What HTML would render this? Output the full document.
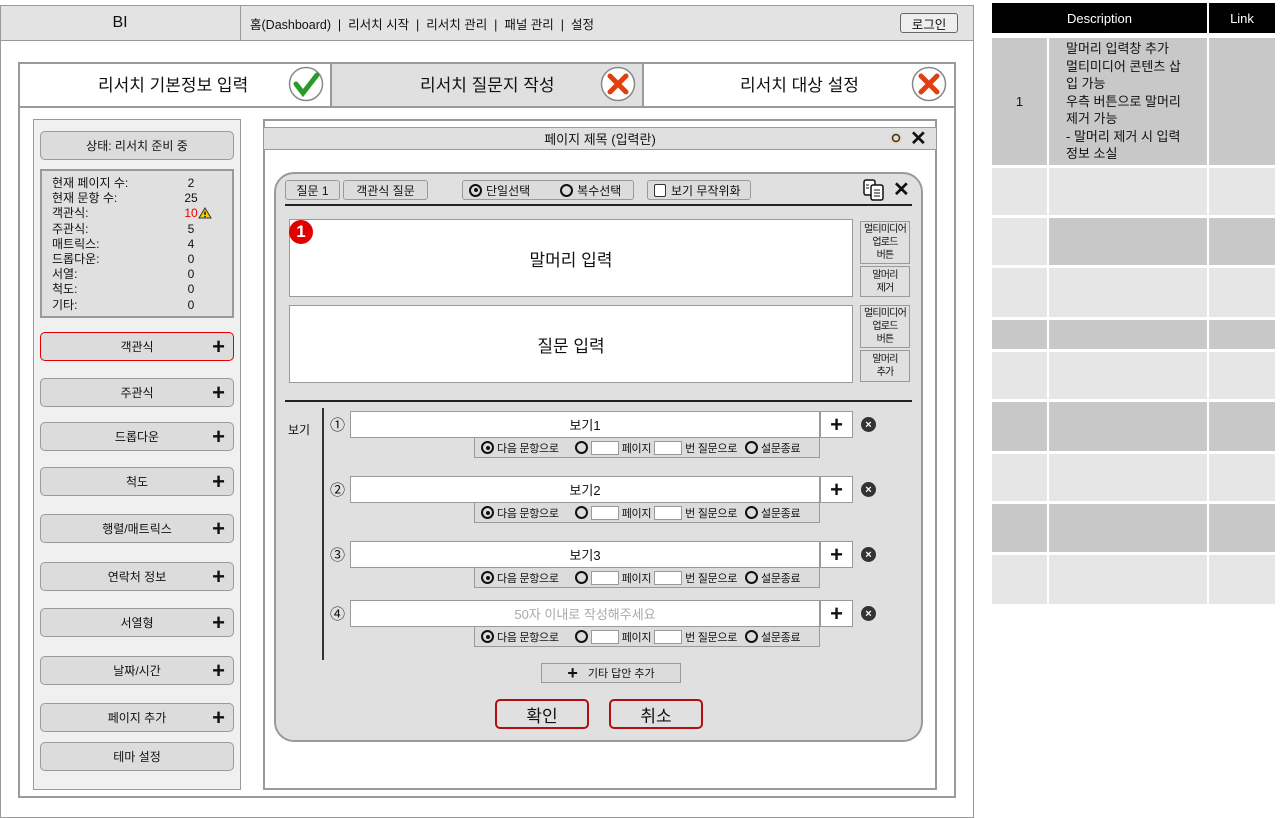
<!DOCTYPE html>
<html><head><meta charset="utf-8"><style>
*{box-sizing:border-box;margin:0;padding:0}
body{width:1280px;height:818px;background:#fff;position:relative;overflow:hidden;font-family:"Liberation Sans","Noto Sans CJK KR",sans-serif;font-size:12px;color:#111}
.a{position:absolute}
.c{display:flex;align-items:center;justify-content:center;text-align:center}
.btn{position:absolute;background:#dcdcdc;border:1px solid #9a9a9a;border-radius:5px;display:flex;align-items:center;justify-content:center;font-size:12px}
.plus{position:absolute;right:8px;top:50%;transform:translateY(-50%);font-size:22px;font-weight:bold;line-height:1}
.wbox{position:absolute;background:#fff;border:1px solid #9a9a9a;display:flex;align-items:center;justify-content:center}
.side{position:absolute;background:#e0e0e0;border:1px solid #9a9a9a;font-size:10px;letter-spacing:-0.8px;line-height:13px;text-align:center;display:flex;align-items:center;justify-content:center;white-space:nowrap}
.rad{display:inline-block;width:13px;height:13px;border:2px solid #111;border-radius:50%;vertical-align:middle;position:relative}
.rad.on::after{content:"";position:absolute;left:2.5px;top:2.5px;width:4px;height:4px;background:#111;border-radius:50%}
.sub{position:absolute;left:474px;width:346px;height:21px;background:#dcdcdc;border:1px solid #9a9a9a;font-size:11px;letter-spacing:-0.3px;display:flex;align-items:center;gap:3px;padding-left:6px}
.sb{display:inline-block;width:28px;height:14px;background:#fff;border:1px solid #9a9a9a}
.xc{position:absolute;width:15px;height:15px;border-radius:50%;background:#333;color:#fff;font-size:11px;font-weight:bold;display:flex;align-items:center;justify-content:center}
.pl{position:absolute;width:33px;height:27px;background:#fff;border:1px solid #9a9a9a;font-size:22px;font-weight:bold;display:flex;align-items:center;justify-content:center}
.td{position:absolute}
</style></head><body>
<div class="a" style="left:0;top:5px;width:974px;height:813px;border:1px solid #9a9a9a"></div>
<div class="a" style="left:0;top:5px;width:974px;height:36px;background:#e3e3e3;border:1px solid #9a9a9a"></div>
<div class="a c" style="left:0;top:5px;width:241px;height:36px;border-right:1px solid #9a9a9a;font-size:16px">BI</div>
<div class="a" style="left:250px;top:14px;font-size:12.5px">홈(Dashboard) &nbsp;|&nbsp; 리서치 시작 &nbsp;|&nbsp; 리서치 관리 &nbsp;|&nbsp; 패널 관리 &nbsp;|&nbsp; 설정</div>
<div class="a c" style="left:900px;top:13px;width:58px;height:20px;border:1px solid #666;border-radius:3px;background:#eee;font-size:12.5px">로그인</div>

<div class="a" style="left:18px;top:62px;width:938px;height:736px;border:2px solid #9a9a9a"></div>
<div class="a" style="left:18px;top:62px;width:938px;height:46px;border:2px solid #9a9a9a"></div>
<div class="a" style="left:330px;top:64px;width:314px;height:42px;background:#e0e0e0;border-left:2px solid #9a9a9a;border-right:2px solid #9a9a9a"></div>
<div class="a" style="left:98px;top:71px;font-size:17px">리서치 기본정보 입력</div>
<div class="a" style="left:420px;top:71px;font-size:17px">리서치 질문지 작성</div>
<div class="a" style="left:740px;top:71px;font-size:17px">리서치 대상 설정</div>
<svg class="a" style="left:288px;top:66px" width="36" height="36"><circle cx="18" cy="18" r="16.5" fill="#fff" stroke="#888" stroke-width="1.5"/><path d="M8 18 L15 27 L29 9" fill="none" stroke="#2a9a2a" stroke-width="5" stroke-linecap="round"/></svg>
<svg class="a" style="left:600px;top:66px" width="36" height="36"><circle cx="18" cy="18" r="16.5" fill="#fff" stroke="#888" stroke-width="1.5"/><path d="M10 10 L26 26 M26 10 L10 26" stroke="#e04010" stroke-width="5" stroke-linecap="round"/></svg>
<svg class="a" style="left:911px;top:66px" width="36" height="36"><circle cx="18" cy="18" r="16.5" fill="#fff" stroke="#888" stroke-width="1.5"/><path d="M10 10 L26 26 M26 10 L10 26" stroke="#e04010" stroke-width="5" stroke-linecap="round"/></svg>

<div class="a" style="left:33px;top:119px;width:208px;height:671px;background:#f0f0f0;border:1px solid #9a9a9a"></div>
<div class="btn" style="left:40px;top:131px;width:194px;height:29px">상태: 리서치 준비 중</div>
<div class="a" style="left:40px;top:169px;width:194px;height:149px;background:#e0e0e0;border:2px solid #9a9a9a"></div>
<div class="a" style="left:52px;top:176px;font-size:12px;line-height:15.2px">현재 페이지 수:<br>현재 문항 수:<br>객관식:<br>주관식:<br>매트릭스:<br>드롭다운:<br>서열:<br>척도:<br>기타:</div>
<div class="a" style="left:180px;top:176px;font-size:12px;line-height:15.2px;text-align:center;width:22px">2<br>25<br><span style="color:#e00">10</span><br>5<br>4<br>0<br>0<br>0<br>0</div>
<svg class="a" style="left:198px;top:207px" width="14" height="12"><path d="M7 1 L13 11 L1 11Z" fill="#f5d000" stroke="#333"/><path d="M7 4.5 V8" stroke="#000" stroke-width="1.3"/><circle cx="7" cy="9.6" r=".7"/></svg>
<div class="btn" style="left:40px;top:332px;width:194px;height:29px;border:1.5px solid #e00000">객관식<span class="plus">+</span></div>
<div class="btn" style="left:40px;top:378px;width:194px;height:29px">주관식<span class="plus">+</span></div>
<div class="btn" style="left:40px;top:422px;width:194px;height:29px">드롭다운<span class="plus">+</span></div>
<div class="btn" style="left:40px;top:467px;width:194px;height:29px">척도<span class="plus">+</span></div>
<div class="btn" style="left:40px;top:514px;width:194px;height:29px">행렬/매트릭스<span class="plus">+</span></div>
<div class="btn" style="left:40px;top:562px;width:194px;height:29px">연락처 정보<span class="plus">+</span></div>
<div class="btn" style="left:40px;top:608px;width:194px;height:29px">서열형<span class="plus">+</span></div>
<div class="btn" style="left:40px;top:656px;width:194px;height:29px">날짜/시간<span class="plus">+</span></div>
<div class="btn" style="left:40px;top:703px;width:194px;height:29px">페이지 추가<span class="plus">+</span></div>
<div class="btn" style="left:40px;top:742px;width:194px;height:29px">테마 설정</div>

<div class="a" style="left:263px;top:119px;width:674px;height:671px;border:2px solid #9a9a9a"></div>
<div class="a c" style="left:263px;top:127px;width:674px;height:23px;background:#e0e0e0;border:1px solid #9a9a9a;font-size:13px">페이지 제목 (입력란)</div>
<svg class="a" style="left:888px;top:130px" width="16" height="16"><circle cx="8" cy="8" r="6" fill="#e8d8c0"/><circle cx="8" cy="8" r="3.5" fill="none" stroke="#333" stroke-width="1.5"/></svg>
<div class="a" style="left:910px;top:126px;font-size:20px;font-weight:bold">✕</div>

<div class="a" style="left:274px;top:172px;width:649px;height:570px;background:#e0e0e0;border:2px solid #9a9a9a;border-radius:20px"></div>
<div class="btn" style="left:285px;top:180px;width:55px;height:20px;border-radius:3px;font-size:12px">질문 1</div>
<div class="btn" style="left:343px;top:180px;width:85px;height:20px;border-radius:3px;font-size:12px">객관식 질문</div>
<div class="btn" style="left:462px;top:180px;width:172px;height:20px;border-radius:3px;font-size:12px;justify-content:flex-start;padding-left:6px;gap:4px"><span class="rad on"></span>단일선택<span style="width:22px"></span><span class="rad"></span>복수선택</div>
<div class="btn" style="left:647px;top:180px;width:104px;height:20px;border-radius:3px;font-size:12px;justify-content:flex-start;padding-left:6px;gap:5px"><span style="display:inline-block;width:12px;height:13px;border:1.5px solid #333;border-radius:2px;background:#fff"></span>보기 무작위화</div>
<svg class="a" style="left:862px;top:178px" width="24" height="24"><rect x="2" y="2" width="11" height="15" rx="2" fill="#fff" stroke="#111" stroke-width="1.5"/><rect x="9" y="7" width="12" height="15" rx="2" fill="#fff" stroke="#111" stroke-width="1.5"/><path d="M12 12h6M12 15h6M12 18h6M4 7h3M4 10h3" stroke="#111"/></svg>
<div class="a" style="left:893px;top:177px;font-size:20px;font-weight:bold">✕</div>
<div class="a" style="left:285px;top:204px;width:627px;height:2px;background:#222"></div>

<div class="wbox" style="left:289px;top:219px;width:564px;height:78px;font-size:17px">말머리 입력</div>
<div class="a c" style="left:289px;top:220px;width:24px;height:24px;border-radius:50%;background:#e00000;color:#fff;font-size:17px;font-weight:bold">1</div>
<div class="side" style="left:860px;top:221px;width:50px;height:43px">멀티미디어<br>업로드<br>버튼</div>
<div class="side" style="left:860px;top:266px;width:50px;height:31px">말머리<br>제거</div>
<div class="wbox" style="left:289px;top:305px;width:564px;height:78px;font-size:17px">질문 입력</div>
<div class="side" style="left:860px;top:305px;width:50px;height:43px">멀티미디어<br>업로드<br>버튼</div>
<div class="side" style="left:860px;top:350px;width:50px;height:32px">말머리<br>추가</div>
<div class="a" style="left:285px;top:400px;width:627px;height:2px;background:#222"></div>

<div class="a" style="left:288px;top:421px;font-size:12px">보기</div>
<div class="a" style="left:322px;top:408px;width:1.5px;height:252px;background:#333"></div>

<div class="a" style="left:330px;top:414px;font-size:15px">①</div>
<div class="wbox" style="left:350px;top:411px;width:470px;height:27px;font-size:13px">보기1</div>
<div class="pl" style="left:820px;top:411px">+</div><div class="xc" style="left:861px;top:417px">×</div>
<div class="sub" style="top:437px"><span class="rad on"></span>다음 문항으로<span style="width:10px"></span><span class="rad"></span><span class="sb"></span>페이지<span class="sb"></span>번 질문으로<span style="width:2px"></span><span class="rad"></span>설문종료</div>

<div class="a" style="left:330px;top:479px;font-size:15px">②</div>
<div class="wbox" style="left:350px;top:476px;width:470px;height:27px;font-size:13px">보기2</div>
<div class="pl" style="left:820px;top:476px">+</div><div class="xc" style="left:861px;top:482px">×</div>
<div class="sub" style="top:502px"><span class="rad on"></span>다음 문항으로<span style="width:10px"></span><span class="rad"></span><span class="sb"></span>페이지<span class="sb"></span>번 질문으로<span style="width:2px"></span><span class="rad"></span>설문종료</div>

<div class="a" style="left:330px;top:544px;font-size:15px">③</div>
<div class="wbox" style="left:350px;top:541px;width:470px;height:27px;font-size:13px">보기3</div>
<div class="pl" style="left:820px;top:541px">+</div><div class="xc" style="left:861px;top:547px">×</div>
<div class="sub" style="top:567px"><span class="rad on"></span>다음 문항으로<span style="width:10px"></span><span class="rad"></span><span class="sb"></span>페이지<span class="sb"></span>번 질문으로<span style="width:2px"></span><span class="rad"></span>설문종료</div>

<div class="a" style="left:330px;top:603px;font-size:15px">④</div>
<div class="wbox" style="left:350px;top:600px;width:470px;height:27px;font-size:13px;color:#aaa">50자 이내로 작성해주세요</div>
<div class="pl" style="left:820px;top:600px">+</div><div class="xc" style="left:861px;top:606px">×</div>
<div class="sub" style="top:626px"><span class="rad on"></span>다음 문항으로<span style="width:10px"></span><span class="rad"></span><span class="sb"></span>페이지<span class="sb"></span>번 질문으로<span style="width:2px"></span><span class="rad"></span>설문종료</div>

<div class="a c" style="left:541px;top:663px;width:140px;height:20px;background:#dcdcdc;border:1px solid #9a9a9a;font-size:11px;gap:10px"><b style="font-size:18px">+</b>기타 답안 추가</div>
<div class="a c" style="left:495px;top:699px;width:94px;height:30px;border:2px solid #b01010;border-radius:5px;background:#e0e0e0;font-size:17px">확인</div>
<div class="a c" style="left:609px;top:699px;width:94px;height:30px;border:2px solid #b01010;border-radius:5px;background:#e0e0e0;font-size:17px">취소</div>

<div class="a c" style="left:992px;top:3px;width:215px;height:30px;background:#000;color:#fff;font-size:13px">Description</div>
<div class="a c" style="left:1209px;top:3px;width:66px;height:30px;background:#000;color:#fff;font-size:13px">Link</div>
<div class="td c" style="left:992px;top:38px;width:55px;height:127px;background:#c8c8c8;font-size:13px">1</div>
<div class="td" style="left:1049px;top:38px;width:158px;height:127px;background:#c8c8c8;font-size:13px;line-height:17.5px;padding:2px 0 0 17px">말머리 입력창 추가<br>멀티미디어 콘텐츠 삽<br>입 가능<br>우측 버튼으로 말머리<br>제거 가능<br>- 말머리 제거 시 입력<br>정보 소실</div>
<div class="td" style="left:1209px;top:38px;width:66px;height:127px;background:#c8c8c8"></div>

<div class="td" style="left:992px;top:168px;width:55px;height:47px;background:#e6e6e6"></div><div class="td" style="left:1049px;top:168px;width:158px;height:47px;background:#e6e6e6"></div><div class="td" style="left:1209px;top:168px;width:66px;height:47px;background:#e6e6e6"></div>
<div class="td" style="left:992px;top:218px;width:55px;height:47px;background:#e6e6e6"></div><div class="td" style="left:1049px;top:218px;width:158px;height:47px;background:#c8c8c8"></div><div class="td" style="left:1209px;top:218px;width:66px;height:47px;background:#c8c8c8"></div>
<div class="td" style="left:992px;top:268px;width:55px;height:49px;background:#e6e6e6"></div><div class="td" style="left:1049px;top:268px;width:158px;height:49px;background:#e6e6e6"></div><div class="td" style="left:1209px;top:268px;width:66px;height:49px;background:#e6e6e6"></div>
<div class="td" style="left:992px;top:320px;width:55px;height:29px;background:#c8c8c8"></div><div class="td" style="left:1049px;top:320px;width:158px;height:29px;background:#c8c8c8"></div><div class="td" style="left:1209px;top:320px;width:66px;height:29px;background:#c8c8c8"></div>
<div class="td" style="left:992px;top:352px;width:55px;height:47px;background:#e6e6e6"></div><div class="td" style="left:1049px;top:352px;width:158px;height:47px;background:#e6e6e6"></div><div class="td" style="left:1209px;top:352px;width:66px;height:47px;background:#e6e6e6"></div>
<div class="td" style="left:992px;top:402px;width:55px;height:49px;background:#c8c8c8"></div><div class="td" style="left:1049px;top:402px;width:158px;height:49px;background:#c8c8c8"></div><div class="td" style="left:1209px;top:402px;width:66px;height:49px;background:#c8c8c8"></div>
<div class="td" style="left:992px;top:454px;width:55px;height:47px;background:#e6e6e6"></div><div class="td" style="left:1049px;top:454px;width:158px;height:47px;background:#e6e6e6"></div><div class="td" style="left:1209px;top:454px;width:66px;height:47px;background:#e6e6e6"></div>
<div class="td" style="left:992px;top:504px;width:55px;height:48px;background:#c8c8c8"></div><div class="td" style="left:1049px;top:504px;width:158px;height:48px;background:#c8c8c8"></div><div class="td" style="left:1209px;top:504px;width:66px;height:48px;background:#c8c8c8"></div>
<div class="td" style="left:992px;top:555px;width:55px;height:49px;background:#e6e6e6"></div><div class="td" style="left:1049px;top:555px;width:158px;height:49px;background:#e6e6e6"></div><div class="td" style="left:1209px;top:555px;width:66px;height:49px;background:#e6e6e6"></div>
</body></html>
